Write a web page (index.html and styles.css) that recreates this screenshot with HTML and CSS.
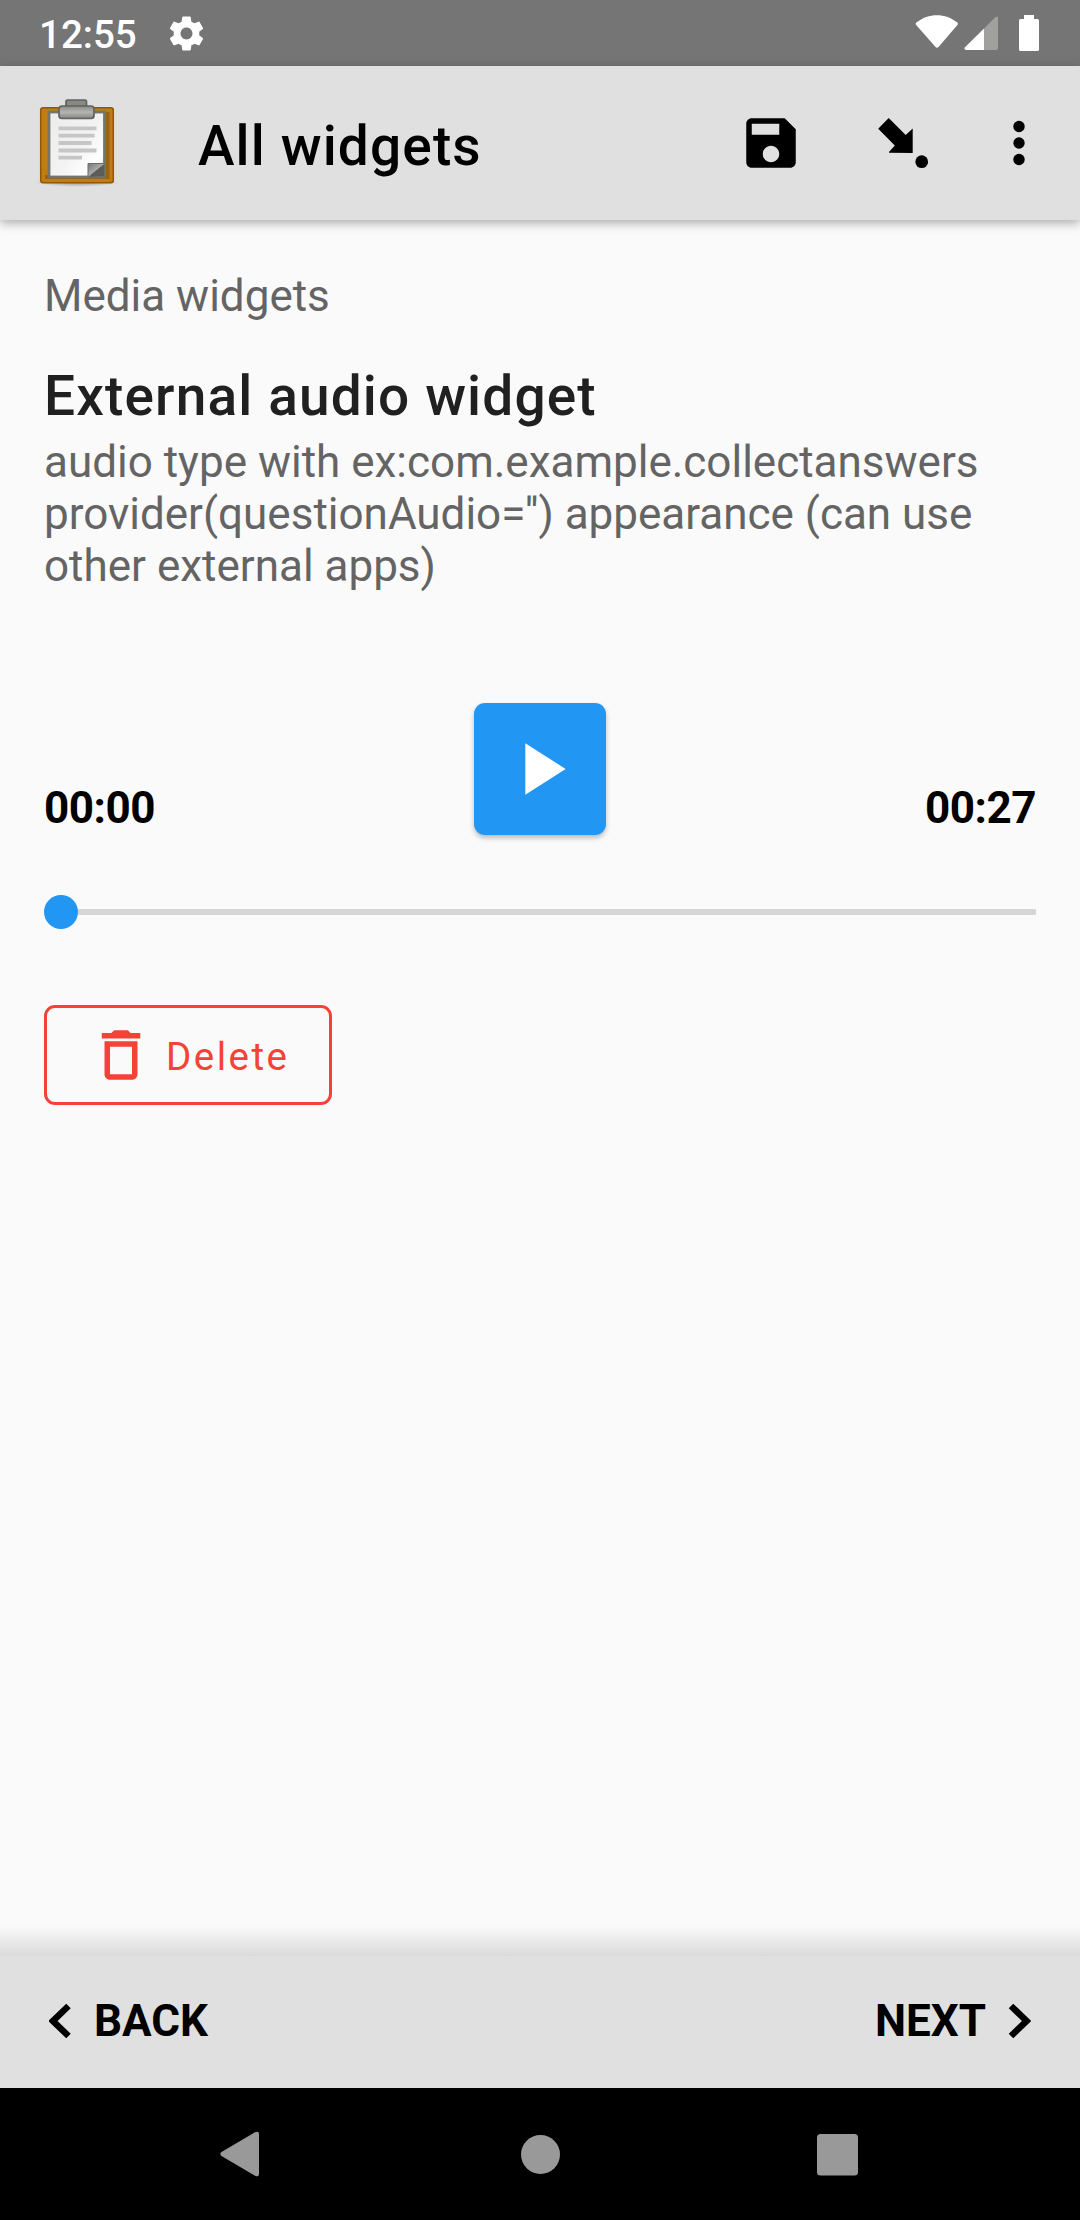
FILE: index.html
```html
<!DOCTYPE html>
<html lang="en">
<head>
<meta charset="utf-8">
<title>All widgets</title>
<link rel="stylesheet" href="styles.css">
</head>
<body>
<div class="screen">
  <div class="status-bar">
    <span class="clock">12:55</span>
    <svg class="gear" viewBox="0 0 24 24"><path d="M19.43 12.98c.04-.32.07-.64.07-.98s-.03-.66-.07-.98l2.11-1.65c.19-.15.24-.42.12-.64l-2-3.46c-.12-.22-.39-.3-.61-.22l-2.49 1c-.52-.4-1.08-.73-1.69-.98l-.38-2.65C14.46 2.18 14.25 2 14 2h-4c-.25 0-.46.18-.49.42l-.38 2.65c-.61.25-1.17.59-1.69.98l-2.49-1c-.23-.09-.49 0-.61.22l-2 3.46c-.13.22-.07.49.12.64l2.11 1.65c-.04.32-.07.65-.07.98s.03.66.07.98l-2.11 1.65c-.19.15-.24.42-.12.64l2 3.46c.12.22.39.3.61.22l2.49-1c.52.4 1.08.73 1.69.98l.38 2.65c.03.24.24.42.49.42h4c.25 0 .46-.18.49-.42l.38-2.65c.61-.25 1.17-.59 1.69-.98l2.49 1c.23.09.49 0 .61-.22l2-3.46c.12-.22.07-.49-.12-.64l-2.11-1.65zM12 15.5c-1.93 0-3.5-1.57-3.5-3.5s1.57-3.5 3.5-3.5 3.5 1.57 3.5 3.5-1.57 3.5-3.5 3.5z"/></svg>
    <svg class="signals" viewBox="0 0 124 38">
      <path d="M1.3 8.6C13.5-1.2 30.500-1.200 42.300 8.600Q43.400 9.700 42.400 11L23.500 33Q22 34.600 20.500 33L1.200 11Q.2 9.700 1.300 8.600Z"/>
      <path class="dim" d="M69 14.500 80 3.600Q83 1.200 83 4V34Q83 36 81 36H69Z"/>
      <path d="M69 14.500V36H51Q48.500 35.500 50 33.300Z"/>
      <path d="M109 1h10v4h3.500q1.500 0 1.500 1.500V35.500q0 1.500-1.500 1.500h-17q-1.500 0-1.500-1.500V6.500Q104 5 105.500 5H109Z"/>
    </svg>
  </div>

  <header class="app-bar">
    <svg class="clipboard" viewBox="0 0 84 96">
      <defs>
        <linearGradient id="paper" x1="0" y1="0" x2="1" y2="1"><stop offset="0" stop-color="#ececec"/><stop offset=".55" stop-color="#f3f3f3"/><stop offset=".8" stop-color="#fff"/><stop offset="1" stop-color="#ddd"/></linearGradient>
        <linearGradient id="clip" x1="0" y1="0" x2="0" y2="1"><stop offset="0" stop-color="#8a8b88"/><stop offset=".5" stop-color="#b5b5b2"/><stop offset="1" stop-color="#858683"/></linearGradient>
        <linearGradient id="fold" x1="0" y1="0" x2="1" y2="1"><stop offset="0" stop-color="#777"/><stop offset=".48" stop-color="#aaa"/><stop offset=".55" stop-color="#555"/><stop offset="1" stop-color="#777"/></linearGradient>
        <radialGradient id="ground"><stop offset="0" stop-color="#000" stop-opacity=".35"/><stop offset="1" stop-color="#000" stop-opacity="0"/></radialGradient>
      </defs>
      <ellipse cx="42" cy="87" rx="42" ry="5" fill="url(#ground)"/>
      <rect x="5.700" y="12.700" width="72.600" height="75" rx="2.500" fill="#c17d11" stroke="#8f5902" stroke-width="1.500"/>
      <path d="M72.500 17V82H10" fill="none" stroke="#99630f" stroke-width="4"/>
      <rect x="14" y="17" width="55.500" height="65" fill="url(#paper)" stroke="#73746f" stroke-width="2.800"/>
      <path d="M23.500 33.300h38M23.500 40.700h36M23.500 48h33M23.500 55.500h38M23.500 62.700h23.500" fill="none" stroke="#c6c6c6" stroke-width="3.800"/>
      <path d="M53 68.500h16.500V82H53Z" fill="url(#fold)" stroke="#6c6d69"/>
      <path d="M55 80.500 69 69.500V81Z" fill="#5c5c5a"/>
      <rect x="31" y="5" width="20.500" height="10" rx="1.500" fill="#888985" stroke="#60615e" stroke-width="1.700"/>
      <rect x="24" y="11" width="35" height="12.500" rx="3" fill="url(#clip)" stroke="#62635f" stroke-width="1.700"/>
    </svg>
    <h1 class="app-title">All widgets</h1>
    <div class="actions">
      <svg class="icon" viewBox="0 0 24 24"><path d="M17 3H5c-1.110 0-2 .9-2 2v14c0 1.100.89 2 2 2h14c1.100 0 2-.9 2-2V7l-4-4zm-5 16c-1.660 0-3-1.340-3-3s1.340-3 3-3 3 1.340 3 3-1.340 3-3 3zm3-10H5V5h10v4z"/></svg>
      <svg class="icon" viewBox="0 0 66 66"><path d="M18.700 8 35.700 25 42.700 18.500V43L19 42.800V42L24.800 35.500 8.200 18.700Z"/><circle cx="51.700" cy="51.700" r="6.400"/></svg>
      <svg class="more" viewBox="0 0 12 46"><circle cx="6" cy="6.500" r="5.700"/><circle cx="6" cy="23" r="5.700"/><circle cx="6" cy="39.500" r="5.700"/></svg>
    </div>
  </header>

  <main class="content">
    <p class="group">Media widgets</p>
    <h2 class="question">External audio widget</h2>
    <p class="hint">audio type with ex:com.example.collectanswers<br>provider(questionAudio='') appearance (can use<br>other external apps)</p>
    <div class="player">
      <span class="time">00:00</span>
      <button class="play" aria-label="Play"><svg viewBox="0 0 24 24"><path d="M8 5v14l11-7z"/></svg></button>
      <span class="time end">00:27</span>
    </div>
    <div class="slider"><span class="thumb"></span><span class="track"></span></div>
    <button class="delete"><svg viewBox="0 0 24 24"><path d="M6 19c0 1.100.9 2 2 2h8c1.100 0 2-.9 2-2V7H6v12zM8 9h8v10H8V9zm7.500-5l-1-1h-5l-1 1H5v2h14V4z"/></svg><span>Delete</span></button>
  </main>

  <div class="fade"></div>
  <footer class="pager">
    <div class="page-link"><svg class="chevron" viewBox="0 0 23 36"><path d="M19.500 3 4 18 19.500 33"/></svg><span>BACK</span></div>
    <div class="page-link next"><span>NEXT</span><svg class="chevron" viewBox="0 0 23 36"><path d="M3 3 18.500 18 3 33"/></svg></div>
  </footer>
  <nav class="system-nav">
    <svg viewBox="0 0 60 60"><path d="M11.500 28 45 8.200Q49 6.500 49 10V50Q49 53.500 45 51.800L11.500 32Q9 30 11.500 28Z"/></svg>
    <svg viewBox="0 0 60 60"><circle cx="30.500" cy="30.500" r="19.500"/></svg>
    <svg viewBox="0 0 60 60"><rect x="7" y="10" width="41" height="41.500" rx="3.500"/></svg>
  </nav>
</div>
</body>
</html>
```
FILE: styles.css
```css
* { box-sizing: border-box; }
body { margin: 0; font-family: Roboto, "Liberation Sans", sans-serif; color: #000; background: #fafafa; }
h1, h2, p { margin: 0; }
button { margin: 0; padding: 0; font: inherit; }
svg { display: block; flex: none; }

.screen { width: 1080px; height: 2220px; display: flex; flex-direction: column; overflow: hidden; }

.status-bar { height: 66px; flex: none; display: flex; align-items: center; padding: 0 41px 0 39px; background: #757575; color: #fff; fill: #fff; }
.clock { width: 127px; padding-top: 3px; font-size: 38.5px; font-weight: 500; line-height: 46px; }
.gear { width: 41px; height: 41px; }
.signals { width: 124px; height: 38px; margin-left: auto; }
.dim { fill: #a0a09e; }

.app-bar { height: 154px; flex: none; display: flex; align-items: center; padding: 0 55px 0 35px; background: #e0e0e0; box-shadow: 0 3px 10px rgba(0, 0, 0, .32); }
.clipboard { width: 84px; height: 96px; }
.app-title { margin-left: 79px; font-size: 55px; line-height: 64px; font-weight: 500; letter-spacing: 1.14px; padding-top: 5px; }
.actions { display: flex; align-items: center; margin-left: auto; }
.icon { width: 66px; height: 66px; margin-right: 66px; }
.icon + .icon { margin-right: 77px; }
.more { width: 12px; height: 46px; }

.content { flex: 1; min-height: 0; padding: 50px 44px 0; }
.group { font-size: 44px; line-height: 52px; color: #646464; }
.question { margin-top: 42px; font-size: 55px; line-height: 64px; font-weight: 500; letter-spacing: 1.14px; color: #202020; }
.hint { margin-top: 8px; font-size: 44px; line-height: 52px; color: #646464; }

.player { display: grid; grid-template-columns: 1fr 132px 1fr; align-items: end; margin-top: 111px; }
.time { padding-bottom: 1px; font-size: 44px; line-height: 52px; font-weight: 700; letter-spacing: -.45px; }
.end { text-align: right; }
.play { width: 132px; height: 132px; display: flex; align-items: center; justify-content: center; border: 0; border-radius: 11px; background: #2196f3; fill: #fff; box-shadow: 0 3px 5px rgba(0, 0, 0, .25); }
.play svg { width: 88px; height: 88px; }

.slider { display: flex; align-items: center; margin-top: 60px; height: 34px; }
.thumb { width: 34px; height: 34px; border-radius: 50%; background: #2196f3; }
.track { flex: 1; height: 6px; background: #d6d6d6; }

.delete { display: flex; align-items: center; width: 288px; height: 100px; margin-top: 76px; padding-left: 41px; border: 3px solid #f44336; border-radius: 11px; background: transparent; color: #f44336; fill: #f44336; font-size: 38.5px; line-height: 46px; letter-spacing: 2.5px; }
.delete svg { width: 66px; height: 66px; }
.delete span { margin-left: 12px; padding-top: 3px; }

.fade { height: 30px; flex: none; background: linear-gradient(#fafafa, #dadada); }
.pager { height: 132px; flex: none; display: flex; align-items: center; justify-content: space-between; padding: 0 49px 2px; background: #e0e0e0; font-size: 44px; line-height: 52px; font-weight: 700; }
.page-link { display: flex; align-items: center; gap: 22px; }
.chevron { width: 23px; height: 36px; fill: none; stroke: #000; stroke-width: 6.500px; }

.system-nav { height: 132px; flex: none; display: flex; align-items: center; justify-content: space-between; padding: 0 210px; background: #000; fill: #999; }
.system-nav svg { width: 60px; height: 60px; }
```
